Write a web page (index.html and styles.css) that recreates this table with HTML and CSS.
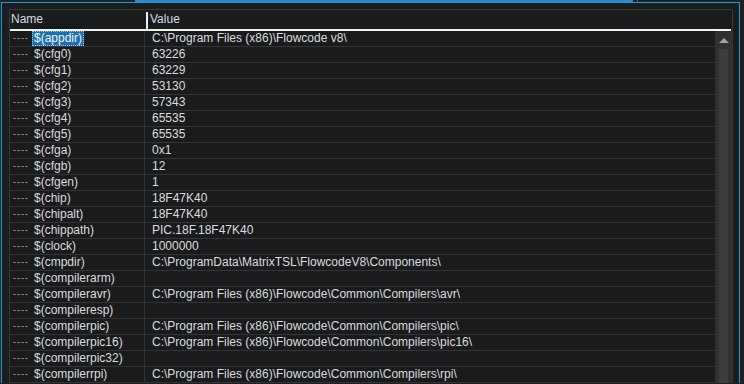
FILE: index.html
```html
<!DOCTYPE html>
<html>
<head>
<meta charset="utf-8">
<link rel="stylesheet" href="styles.css">
</head>
<body>
<div class="topstrip">
  <div class="ts-a"></div>
  <div class="ts-b"></div>
  <div class="ts-c"></div>
  <div class="ts-d"></div>
  <div class="ts-e"></div>
</div>
<div class="panel">
  <div class="table">
    <div class="header">
      <div class="h-name">Name</div>
      <div class="h-div"></div>
      <div class="h-value">Value</div>
    </div>
    <div class="body">
      <div class="rows">
        <div class="row"><div class="c-name"><span class="dash"></span><span class="label sel">$(appdir)</span></div><div class="c-value">C:\Program Files (x86)\Flowcode v8\</div></div>
        <div class="row"><div class="c-name"><span class="dash"></span><span class="label">$(cfg0)</span></div><div class="c-value">63226</div></div>
        <div class="row"><div class="c-name"><span class="dash"></span><span class="label">$(cfg1)</span></div><div class="c-value">63229</div></div>
        <div class="row"><div class="c-name"><span class="dash"></span><span class="label">$(cfg2)</span></div><div class="c-value">53130</div></div>
        <div class="row"><div class="c-name"><span class="dash"></span><span class="label">$(cfg3)</span></div><div class="c-value">57343</div></div>
        <div class="row"><div class="c-name"><span class="dash"></span><span class="label">$(cfg4)</span></div><div class="c-value">65535</div></div>
        <div class="row"><div class="c-name"><span class="dash"></span><span class="label">$(cfg5)</span></div><div class="c-value">65535</div></div>
        <div class="row"><div class="c-name"><span class="dash"></span><span class="label">$(cfga)</span></div><div class="c-value">0x1</div></div>
        <div class="row"><div class="c-name"><span class="dash"></span><span class="label">$(cfgb)</span></div><div class="c-value">12</div></div>
        <div class="row"><div class="c-name"><span class="dash"></span><span class="label">$(cfgen)</span></div><div class="c-value">1</div></div>
        <div class="row"><div class="c-name"><span class="dash"></span><span class="label">$(chip)</span></div><div class="c-value">18F47K40</div></div>
        <div class="row"><div class="c-name"><span class="dash"></span><span class="label">$(chipalt)</span></div><div class="c-value">18F47K40</div></div>
        <div class="row"><div class="c-name"><span class="dash"></span><span class="label">$(chippath)</span></div><div class="c-value">PIC.18F.18F47K40</div></div>
        <div class="row"><div class="c-name"><span class="dash"></span><span class="label">$(clock)</span></div><div class="c-value">1000000</div></div>
        <div class="row"><div class="c-name"><span class="dash"></span><span class="label">$(cmpdir)</span></div><div class="c-value">C:\ProgramData\MatrixTSL\FlowcodeV8\Components\</div></div>
        <div class="row"><div class="c-name"><span class="dash"></span><span class="label">$(compilerarm)</span></div><div class="c-value"></div></div>
        <div class="row"><div class="c-name"><span class="dash"></span><span class="label">$(compileravr)</span></div><div class="c-value">C:\Program Files (x86)\Flowcode\Common\Compilers\avr\</div></div>
        <div class="row"><div class="c-name"><span class="dash"></span><span class="label">$(compileresp)</span></div><div class="c-value"></div></div>
        <div class="row"><div class="c-name"><span class="dash"></span><span class="label">$(compilerpic)</span></div><div class="c-value">C:\Program Files (x86)\Flowcode\Common\Compilers\pic\</div></div>
        <div class="row"><div class="c-name"><span class="dash"></span><span class="label">$(compilerpic16)</span></div><div class="c-value">C:\Program Files (x86)\Flowcode\Common\Compilers\pic16\</div></div>
        <div class="row"><div class="c-name"><span class="dash"></span><span class="label">$(compilerpic32)</span></div><div class="c-value"></div></div>
        <div class="row"><div class="c-name"><span class="dash"></span><span class="label">$(compilerrpi)</span></div><div class="c-value">C:\Program Files (x86)\Flowcode\Common\Compilers\rpi\</div></div>
      </div>
      <div class="scrollbar">
        <div class="arrow"></div>
        <div class="thumb"></div>
      </div>
    </div>
  </div>
</div>
</body>
</html>
```

FILE: styles.css
```css
html, body {
  margin: 0;
  padding: 0;
  background: #1d2023;
  width: 744px;
  height: 384px;
  overflow: hidden;
  font-family: "Liberation Sans", Arial, sans-serif;
  font-size: 12px;
}
.topstrip {
  display: flex;
  height: 2px;
}
.ts-a { width: 135px; background: #202326; }
.ts-b { width: 498px; background: #3a86c4; }
.ts-c { width: 4px; background: #1d2023; }
.ts-d { width: 1px; background: #5a5e62; }
.ts-e { flex: 1; background: #1d2023; }

.panel {
  margin-left: 1px;
  width: 737px;
  height: 381px;
  border: 1px solid #0aa0e0;
  border-bottom: none;
  background: #1a1c1e;
  padding: 6px 0 0 7px;
  box-sizing: border-box;
  width: 739px;
}
.table {
  width: 724px;
  border: 1px solid #38393b;
  border-bottom: none;
  box-sizing: border-box;
  background: #191b1d;
}
.header {
  display: flex;
  height: 19px;
  border-bottom: 2px solid #f2f2f2;
  align-items: center;
  color: #d4dbe2;
  margin-right: 1px;
}
.h-name {
  width: 135px;
  padding-left: 1px;
  line-height: 19px;
}
.h-div {
  width: 2px;
  height: 17px;
  margin-top: 2px;
  align-self: flex-start;
  background: #f2f2f2;
}
.h-value {
  padding-left: 2px;
  line-height: 19px;
}
.body {
  display: flex;
}
.rows {
  width: 705px;
}
.row {
  display: flex;
  height: 15px;
  border-bottom: 1px solid #333436;
  color: #dcdcdc;
  line-height: 15px;
}
.c-name {
  width: 134px;
  border-right: 1px solid #333436;
  display: flex;
  align-items: center;
  white-space: nowrap;
}
.dash {
  display: inline-block;
  width: 16px;
  height: 1px;
  margin-left: 3px;
  margin-right: 3px;
  background: repeating-linear-gradient(to right, #7a7a7a 0 3px, transparent 3px 4px);
}
.label {
  padding: 0 2px;
  height: 15px;
  box-sizing: border-box;
}
.label.sel {
  background: #1c6fb0;
  outline: 1px dotted #9cc8ea;
  outline-offset: -1px;
  color: #eef4fa;
}
.c-value {
  padding-left: 7px;
  white-space: nowrap;
  overflow: hidden;
  flex: 1;
}
.scrollbar {
  width: 17px;
  background: #2e3032;
  display: flex;
  flex-direction: column;
  align-items: center;
}
.arrow {
  width: 0;
  height: 0;
  margin-top: 7px;
  border-left: 5px solid transparent;
  border-right: 5px solid transparent;
  border-bottom: 5px solid #a0a0a0;
}
.thumb {
  margin-top: 6px;
  width: 9px;
  flex: 1;
  background: #3b3d3f;
}
```
